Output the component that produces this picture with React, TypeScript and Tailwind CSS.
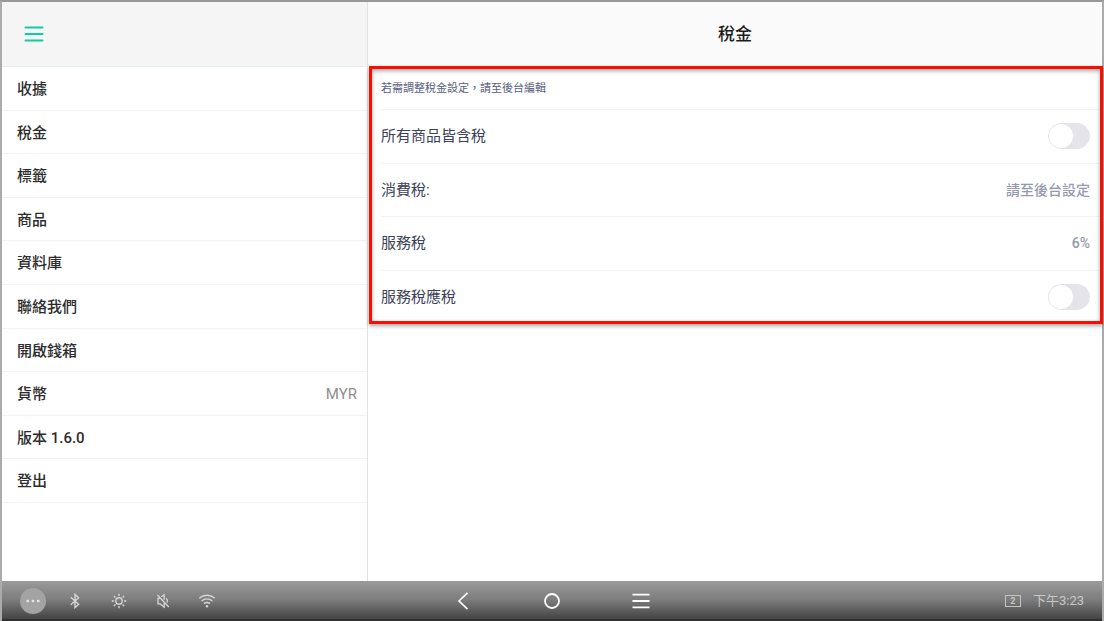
import { useState } from "react";

const menuItems = [
  { label: "收據" },
  { label: "稅金" },
  { label: "標籤" },
  { label: "商品" },
  { label: "資料庫" },
  { label: "聯絡我們" },
  { label: "開啟錢箱" },
  { label: "貨幣", value: "MYR" },
  { label: "版本 1.6.0" },
  { label: "登出" },
];

function Toggle({ id }: { id: string }) {
  const [on, setOn] = useState(false);
  return (
    <input
      id={id}
      type="checkbox"
      role="switch"
      checked={on}
      onChange={() => setOn(!on)}
      className="h-[26px] w-[42px] shrink-0 cursor-pointer appearance-none rounded-full border border-[#e5e4ea] bg-[#e5e4ea] before:block before:size-6 before:rounded-full before:bg-white checked:border-[#00cca3] checked:bg-[#00cca3] checked:before:ml-4"
    />
  );
}

function ToggleRow({ id, label }: { id: string; label: string }) {
  return (
    <div className="flex items-center justify-between border-b border-[#f3f3f5] pr-3 last:border-transparent">
      <label htmlFor={id}>{label}</label>
      <Toggle id={id} />
    </div>
  );
}

function ValueRow({ label, value }: { label: string; value: string }) {
  return (
    <div className="flex items-center justify-between border-b border-[#f3f3f5] pr-3">
      <span>{label}</span>
      <span className="text-sm font-medium text-[#9499ae]">{value}</span>
    </div>
  );
}

function Sidebar() {
  return (
    <aside className="flex w-[366px] shrink-0 flex-col border-r border-[#e2e2e2] bg-white">
      <div className="flex h-[65px] shrink-0 items-center border-b border-[#e4edf1] bg-[#f5f5f5] pl-[22px]">
        <button type="button" aria-label="選單" className="text-[#0fcca4]">
          <svg width="20" height="18" viewBox="0 0 20 18" fill="none" stroke="currentColor" strokeWidth="2" strokeLinecap="round">
            <path d="M1.5 2.5h17M1.5 9h17M1.5 15.5h17" />
          </svg>
        </button>
      </div>
      <nav className="grid min-h-[436px] auto-rows-fr">
        {menuItems.map((item) => (
          <a
            key={item.label}
            href="#"
            className="flex items-center justify-between border-b border-[#f0f2f3] pt-0.5 pr-[10px] pl-[15px] text-[15px] font-medium text-[#2c2c2c]"
          >
            <span>{item.label}</span>
            {item.value && <span className="font-normal text-[#8e8e8e]">{item.value}</span>}
          </a>
        ))}
      </nav>
    </aside>
  );
}

function StatusIcons() {
  return (
    <div className="flex flex-1 items-center pl-[18px] text-[#d6d6d6]">
      <button type="button" aria-label="更多" className="mr-[20px] flex size-[26px] items-center justify-center rounded-full bg-[#a3a3a3]">
        <svg width="14" height="4" viewBox="0 0 14 4" fill="#e4e4e4">
          <rect x="0.5" y="0.8" width="2.5" height="2.4" />
          <rect x="5.7" y="0.8" width="2.5" height="2.4" />
          <rect x="11" y="0.8" width="2.5" height="2.4" />
        </svg>
      </button>
      <svg className="mr-[26px]" width="18" height="18" viewBox="0 0 18 18" fill="none" stroke="currentColor" strokeWidth="1.4">
        <path d="M4.8 5.3l7.8 7-3.6 3.4V2.3l3.6 3.4-7.8 7" />
      </svg>
      <svg className="mr-[26px]" width="18" height="18" viewBox="0 0 18 18" fill="none" stroke="currentColor" strokeWidth="1.4">
        <circle cx="9" cy="9" r="3.2" />
        <path d="M9 1.8v2.2M9 14v2.2M1.8 9H4M14 9h2.2M3.9 3.9l1.5 1.5M12.6 12.6l1.5 1.5M3.9 14.1l1.5-1.5M12.6 5.4l1.5-1.5" />
      </svg>
      <svg className="mr-[26px]" width="18" height="18" viewBox="0 0 18 18" fill="none" stroke="currentColor" strokeWidth="1.3">
        <path d="M3.4 3l11.4 12M6.2 6.3H4v5.6h2.3l3.9 3.3v-4.6M7.4 4.7l2.8-2v5M12.2 6.2c1.2 1.2 1.5 2.8 1 4.4" />
      </svg>
      <svg width="18" height="18" viewBox="0 0 18 18" fill="none" stroke="currentColor" strokeWidth="1.4">
        <path d="M1.2 6.2c4.6-4 11-4 15.6 0M3.6 9c3.2-2.7 7.6-2.7 10.8 0M6 11.6c1.9-1.4 4.1-1.4 6 0" />
        <circle cx="9" cy="14.2" r="1.2" fill="currentColor" stroke="none" />
      </svg>
    </div>
  );
}

function SystemBar() {
  return (
    <footer className="flex h-10 shrink-0 items-center border-b-2 border-[#303030] bg-linear-to-b from-[#9b9b9b] via-[#7c7c7c] to-[#444444] pt-0.5">
      <StatusIcons />
      <div className="flex items-center gap-[69px] text-white">
        <button type="button" aria-label="返回">
          <svg width="20" height="20" viewBox="0 0 20 20" fill="none" stroke="currentColor" strokeWidth="1.7">
            <path d="M14.5 1.8L6 10l8.5 8.2" />
          </svg>
        </button>
        <button type="button" aria-label="主畫面">
          <svg width="20" height="20" viewBox="0 0 20 20" fill="none" stroke="currentColor" strokeWidth="1.8">
            <circle cx="10" cy="10" r="7" />
          </svg>
        </button>
        <button type="button" aria-label="最近使用">
          <svg width="20" height="20" viewBox="0 0 20 20" fill="none" stroke="currentColor" strokeWidth="1.8">
            <path d="M1.5 3.7h17M1.5 10h17M1.5 16.3h17" />
          </svg>
        </button>
      </div>
      <div className="flex flex-1 items-center justify-end gap-3 pr-[18px] text-[#c8c8c8]">
        <span className="flex h-3 w-4 items-center justify-center border border-[#c4c4c4] text-[9px] leading-none font-bold">2</span>
        <time className="text-[13px] leading-5">下午3:23</time>
      </div>
    </footer>
  );
}

export default function App() {
  return (
    <div
      lang="zh-Hant"
      className="flex min-h-screen flex-col border-x-2 border-t-2 border-x-[#ababab] border-t-[#979797] bg-white font-[Roboto,'Noto_Sans_CJK_TC',sans-serif]"
    >
      <div className="flex flex-1">
        <Sidebar />
        <main className="flex min-w-0 flex-1 flex-col">
          <header className="flex h-[65px] shrink-0 items-center justify-center bg-[#fafafa]">
            <h1 className="text-[17px] font-medium text-[#1c1c1c]">稅金</h1>
          </header>
          <section className="relative pl-[13px]">
            <p className="flex h-[43px] items-center border-b border-[#f3f3f5] pt-0.5 text-[11px] text-[#596080]">
              若需調整稅金設定，請至後台編輯
            </p>
            <div className="grid min-h-[214px] auto-rows-fr text-[15px] text-[#3c4258]">
              <ToggleRow id="all-taxed" label="所有商品皆含稅" />
              <ValueRow label="消費稅:" value="請至後台設定" />
              <ValueRow label="服務稅" value="6%" />
              <ToggleRow id="service-taxable" label="服務稅應稅" />
            </div>
            <div className="pointer-events-none absolute -top-px -right-px bottom-0 left-px border-3 border-[#fb0d00] shadow-[0_2px_4px_rgba(0,0,0,0.35),inset_0_2px_4px_rgba(0,0,0,0.35)]" />
          </section>
        </main>
      </div>
      <SystemBar />
    </div>
  );
}
